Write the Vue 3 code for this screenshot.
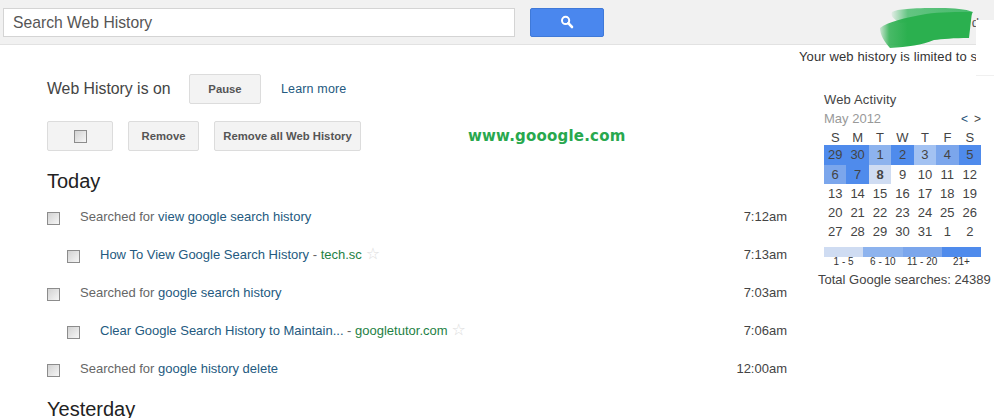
<script setup>
const rows = [
  { id: 1, prefix: "Searched for ", link: "view google search history", time: "7:12am" },
  { id: 2, nested: true, link: "How To View Google Search History", site: "tech.sc", time: "7:13am" },
  { id: 3, prefix: "Searched for ", link: "google search history", time: "7:03am" },
  { id: 4, nested: true, link: "Clear Google Search History to Maintain...", site: "googletutor.com", time: "7:06am" },
  { id: 5, prefix: "Searched for ", link: "google history delete", time: "12:00am" },
];

const dayNames = ["S", "M", "T", "W", "T", "F", "S"];
const days = [
  { n: 29, c: "l4" }, { n: 30, c: "l4" }, { n: 1, c: "l2" }, { n: 2, c: "l4" }, { n: 3, c: "l2b" }, { n: 4, c: "l3" }, { n: 5, c: "l4" },
  { n: 6, c: "l3" }, { n: 7, c: "l4" }, { n: 8, c: "l1 today" }, { n: 9 }, { n: 10 }, { n: 11 }, { n: 12 },
  { n: 13 }, { n: 14 }, { n: 15 }, { n: 16 }, { n: 17 }, { n: 18 }, { n: 19 },
  { n: 20 }, { n: 21 }, { n: 22 }, { n: 23 }, { n: 24 }, { n: 25 }, { n: 26 },
  { n: 27 }, { n: 28 }, { n: 29 }, { n: 30 }, { n: 31 }, { n: 1 }, { n: 2 },
];
const legend = [
  { label: "1 - 5", c: "l1" },
  { label: "6 - 10", c: "l2" },
  { label: "11 - 20", c: "l3" },
  { label: "21+", c: "l4" },
];
</script>

<template>
  <div class="page">
    <header class="topbar">
      <div class="search-input">Search Web History</div>
      <button class="search-btn">
        <svg width="14" height="14" viewBox="0 0 14 14">
          <circle cx="5.6" cy="5.4" r="3.6" fill="none" stroke="#fff" stroke-width="2" />
          <path d="M8.3 8.2L12 12" stroke="#fff" stroke-width="2.6" stroke-linecap="round" />
        </svg>
      </button>
      <span class="account">d</span>
    </header>

    <div class="content">
      <main class="history">
        <div class="status">
          <span class="status-text">Web History is on</span>
          <button class="btn pause">Pause</button>
          <a class="learn">Learn more</a>
        </div>
        <div class="actions">
          <button class="btn select"><span class="check"></span></button>
          <button class="btn remove">Remove</button>
          <button class="btn remove-all">Remove all Web History</button>
        </div>

        <h2 class="day">Today</h2>
        <ul class="rows">
          <li v-for="row in rows" :key="row.id" class="row" :class="{ nested: row.nested }">
            <span class="check"></span>
            <span class="row-text">
              <template v-if="row.prefix"><span class="muted">{{ row.prefix }}</span></template>
              <a class="link">{{ row.link }}</a>
              <template v-if="row.site">
                <span class="muted"> - </span>
                <span class="site">{{ row.site }}</span>
                <span class="star">☆</span>
              </template>
            </span>
            <span class="time">{{ row.time }}</span>
          </li>
        </ul>
        <h2 class="day yesterday">Yesterday</h2>
      </main>

      <aside class="side">
        <div class="limit">Your web history is limited to s</div>
        <div class="activity">
          <div class="activity-title">Web Activity</div>
          <div class="month">
            <span>May 2012</span>
            <span class="nav"><i>&lt;</i><b>&gt;</b></span>
          </div>
          <div class="cal">
            <div v-for="(d, i) in dayNames" :key="i" class="cell">{{ d }}</div>
            <div v-for="(d, i) in days" :key="'d' + i" class="cell" :class="d.c">{{ d.n }}</div>
          </div>
          <div class="legend">
            <div v-for="l in legend" :key="l.label" class="legend-item">
              <div class="swatch" :class="l.c"></div>
              <div class="legend-label">{{ l.label }}</div>
            </div>
          </div>
        </div>
        <div class="total">Total Google searches: 24389</div>
      </aside>
    </div>

    <svg class="scribble" width="100" height="44" viewBox="0 0 100 44">
      <defs>
        <linearGradient id="feather" x1="0" x2="1" y1="0" y2="0">
          <stop offset="0" stop-color="#2bb04f" stop-opacity="0.2" />
          <stop offset="0.1" stop-color="#2bb04f" stop-opacity="0.85" />
          <stop offset="0.3" stop-color="#2bb04f" />
          <stop offset="1" stop-color="#2bb04f" />
        </linearGradient>
        <linearGradient id="featherTop" x1="0" x2="1" y1="0" y2="0">
          <stop offset="0" stop-color="#5cc27c" stop-opacity="0.1" />
          <stop offset="0.2" stop-color="#5cc27c" stop-opacity="0.95" />
          <stop offset="1" stop-color="#45b96a" />
        </linearGradient>
      </defs>
      <path d="M12 5C18 2 30 1 60 1C75 1 85 2 93 5L88 14L30 15L20 16C14 12 10 9 12 5Z" fill="url(#featherTop)" />
      <path d="M0 21C8 15 24 11 46 7C60 5 78 5 92 5L89 31C74 31 62 32 54 33C42 38 28 40 10 41C4 34 0 28 0 21Z" fill="url(#feather)" />
    </svg>
    <div class="patch"></div>
    <div class="watermark">www.gooogle.com</div>
  </div>
</template>

<style>
html, body {
  margin: 0;
  background: #fff;
  overflow: hidden;
}
</style>

<style scoped>
.page {
  position: relative;
  width: 994px;
  height: 418px;
  overflow: hidden;
  font-family: "Liberation Sans", Arial, sans-serif;
  font-size: 13px;
  color: #333;
}

.topbar {
  display: flex;
  align-items: center;
  gap: 15px;
  box-sizing: border-box;
  height: 45px;
  padding-left: 3px;
  background: #f1f1f1;
  border-bottom: 1px solid #e2e2e2;
}

.search-input {
  box-sizing: border-box;
  width: 512px;
  height: 29px;
  padding-left: 9px;
  background: #fff;
  border: 1px solid #d4d4d4;
  font-size: 15.7px;
  line-height: 28px;
  color: #555;
}

.search-btn {
  display: flex;
  align-items: center;
  justify-content: center;
  width: 74px;
  height: 29px;
  padding: 0;
  background: #4a87ee;
  border: 1px solid #3f79d8;
  border-radius: 2px;
}

.account {
  margin-left: auto;
  margin-right: 15px;
  color: #555;
}

.content {
  display: flex;
}

.history {
  box-sizing: border-box;
  width: 799px;
  padding: 29px 12px 0 47px;
  flex: none;
}

.status {
  display: flex;
  align-items: center;
  height: 30px;
}

.status-text {
  width: 142px;
  margin-top: -1px;
  font-size: 15.8px;
  color: #444;
}

.learn {
  margin-left: 20px;
  font-size: 12.5px;
  color: #245a80;
  letter-spacing: 0.15px;
}

.btn {
  box-sizing: border-box;
  height: 30px;
  padding: 0;
  background: #f3f3f3;
  border: 1px solid #dcdcdc;
  border-radius: 2px;
  font-family: inherit;
  font-size: 11.3px;
  font-weight: bold;
  color: #555;
}

.pause {
  width: 72px;
}

.actions {
  display: flex;
  align-items: center;
  margin-top: 17px;
}

.select {
  display: flex;
  align-items: center;
  justify-content: center;
  width: 66px;
}

.remove {
  width: 71px;
  margin-left: 15px;
}

.remove-all {
  width: 147px;
  margin-left: 15px;
}

.check {
  flex: none;
  box-sizing: border-box;
  display: block;
  width: 13px;
  height: 13px;
  background: linear-gradient(135deg, #d2d2d2, #f6f6f6);
  border: 1px solid #8c8c8c;
}

.day {
  margin: 0;
  font-size: 20px;
  font-weight: normal;
  line-height: 24px;
  color: #222;
}

.actions + .day {
  margin-top: 18px;
}

.yesterday {
  margin-top: 8px;
}

.rows {
  list-style: none;
  margin: 6px 0 0;
  padding: 0;
}

.row {
  display: flex;
  align-items: center;
  height: 38px;
}

.row.nested {
  padding-left: 20px;
}

.row-text {
  margin-left: 20px;
  flex: 1;
  margin-top: -4px;
  white-space: pre;
  line-height: 15px;
}

.muted {
  color: #666;
}

.link {
  color: #245a80;
}

.site {
  color: #1e8144;
}

.star {
  margin-left: 4px;
  font-family: "DejaVu Sans", sans-serif;
  font-size: 16px;
  line-height: 1;
  color: #ddd;
}

.time {
  margin-top: -3px;
  color: #444;
}

.side {
  flex: none;
  width: 195px;
}

.limit {
  margin-top: 4px;
  white-space: nowrap;
  letter-spacing: 0.12px;
  color: #333;
}

.activity {
  width: 157px;
  margin: 28px 0 0 25px;
}

.activity-title {
  color: #444;
  line-height: 15px;
  letter-spacing: 0.15px;
}

.month {
  display: flex;
  justify-content: space-between;
  align-items: center;
  margin-top: 4px;
  color: #999;
  line-height: 16px;
}

.nav {
  display: flex;
  gap: 6px;
  color: #1d5078;
  font-size: 12px;
}

.nav i {
  font-style: normal;
}

.nav b {
  font-weight: normal;
  color: #444;
}

.cal {
  display: grid;
  grid-template-columns: repeat(7, 1fr);
  grid-template-rows: 17.3px;
  grid-auto-rows: 19.3px;
  margin-top: 1px;
}

.cell {
  text-align: center;
  line-height: 19px;
  color: #444;
}

.today {
  font-weight: bold;
}

.l1 {
  background: #cfdcf2;
}

.l2 {
  background: #8db3ee;
}

.l2b {
  background: #a3c2f2;
}

.l3 {
  background: #7ba6ec;
}

.l4 {
  background: #4f8bec;
}

.legend {
  display: grid;
  grid-template-columns: repeat(4, 1fr);
  margin-top: 5px;
}

.swatch {
  height: 10px;
}

.legend-label {
  text-align: center;
  font-size: 10px;
  line-height: 10px;
  color: #333;
}

.total {
  margin: 5px 0 0 19px;
  white-space: nowrap;
  color: #444;
}

.scribble {
  position: absolute;
  left: 880px;
  top: 7px;
}

.patch {
  position: absolute;
  left: 976px;
  top: 20px;
  width: 18px;
  height: 55px;
  background: #fff;
  border-bottom: 1px solid #f0f0f0;
}

.watermark {
  position: absolute;
  left: 468px;
  top: 127px;
  font-family: "DejaVu Sans", sans-serif;
  font-size: 15px;
  font-weight: bold;
  letter-spacing: 0.2px;
  color: #28a84e;
  white-space: nowrap;
}
</style>
